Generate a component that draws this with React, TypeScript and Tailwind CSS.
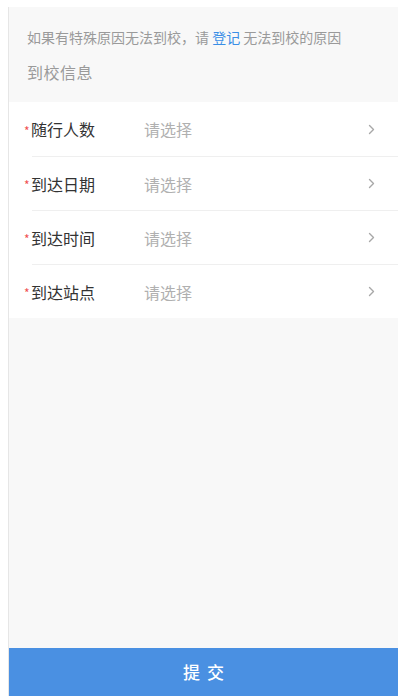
const rows = ['随行人数', '到达日期', '到达时间', '到达站点'];

function Chevron() {
  return (
    <svg width="7" height="11" viewBox="0 0 7 11" fill="none" className="text-[#a8a8a8]">
      <path d="M1.5 1.5L5.5 5.5L1.5 9.5" stroke="currentColor" strokeWidth="1.4" strokeLinecap="round" strokeLinejoin="round" />
    </svg>
  );
}

export default function App() {
  return (
    <div
      className="h-screen bg-white pt-[7px] pb-[3px] pl-[8px] pr-[4px] flex flex-col"
      style={{ fontFamily: '"Noto Sans CJK SC", "Noto Sans", sans-serif' }}
    >
      <div className="flex-1 flex flex-col border-l border-[#e6e6e6] bg-[#f8f8f8]">
        {/* notice */}
        <div className="pt-[15px] pb-[13px] pl-[18px]">
          <p className="h-[30px] leading-[30px] text-[14px] text-[#9a9a9a] whitespace-nowrap">
            如果有特殊原因无法到校，请 <span className="text-[#3a8ee6]">登记</span> 无法到校的原因
          </p>
          <p className="mt-[3px] h-[34px] leading-[34px] text-[16px] tracking-[0.5px] text-[#9a9a9a]">到校信息</p>
        </div>

        {/* form rows */}
        <div className="bg-white">
          {rows.map((label, i) => (
            <div key={label} className="pl-[23px]">
              <div
                className={
                  'h-[54px] flex items-center pr-[23px] ' +
                  (i > 0 ? 'border-t border-[#efefef]' : '')
                }
              >
                <div className="-ml-[8px] w-[120px] flex items-center">
                  <span className="text-[#f05050] text-[12px] leading-none mt-[3px] w-[7px]">*</span>
                  <span className="text-[16px] text-[#333333]">{label}</span>
                </div>
                <span className="flex-1 text-[16px] text-[#b0b0b0]">请选择</span>
                <Chevron />
              </div>
            </div>
          ))}
        </div>

        <div className="flex-1" />

        <button className="h-[48px] w-full bg-[#4a90e2] text-white text-[17px] font-medium tracking-[7px] pl-[7px]">
          提交
        </button>
      </div>
    </div>
  );
}
